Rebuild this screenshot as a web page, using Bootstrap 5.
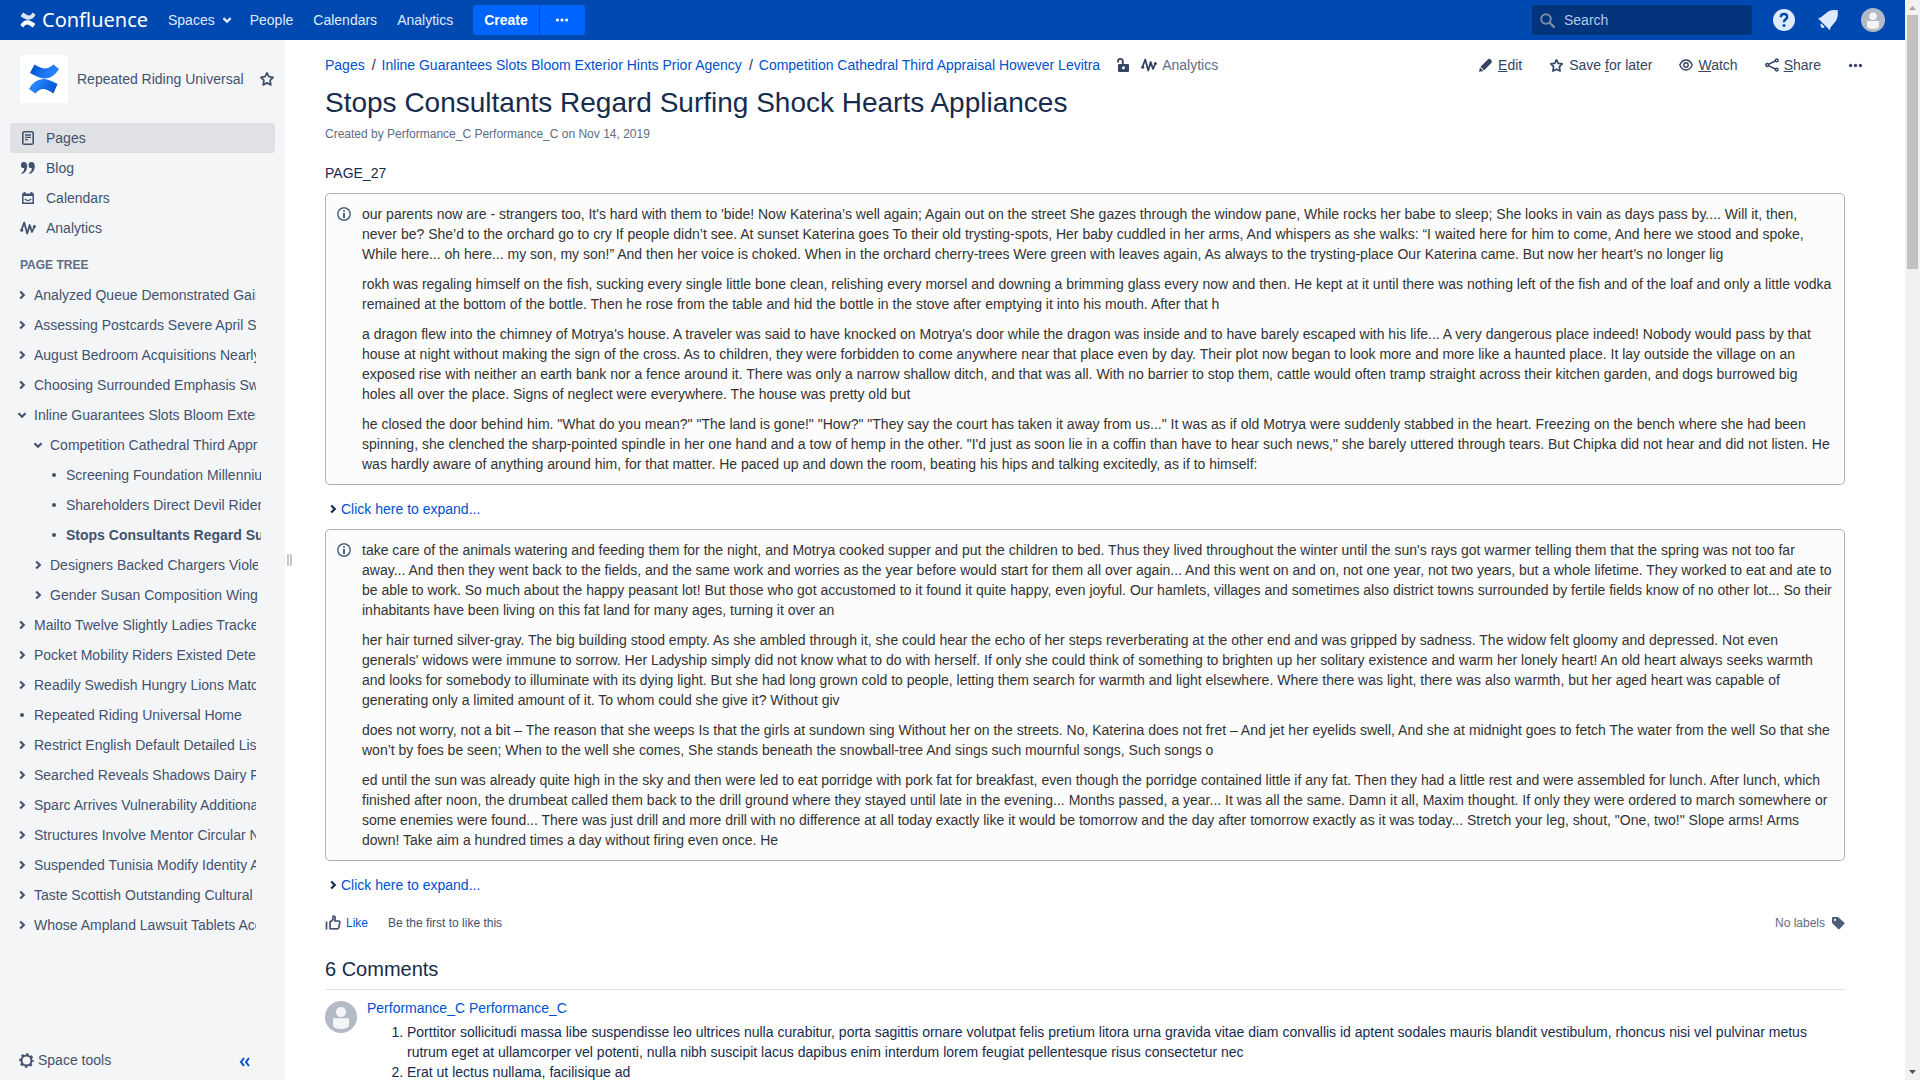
<!DOCTYPE html>
<html lang="en">
<head>
<meta charset="utf-8">
<meta name="viewport" content="width=device-width, initial-scale=1">
<title>Stops Consultants Regard Surfing Shock Hearts Appliances - Confluence</title>
<link href="https://cdn.jsdelivr.net/npm/bootstrap@5.3.0/dist/css/bootstrap.min.css" rel="stylesheet">
<style>
body{font-family:"Liberation Sans",Arial,sans-serif;font-size:14px;line-height:20px;color:#172b4d;background:#fff}
a{color:#0052cc;text-decoration:none}
svg{display:block;flex:none}
/* top bar */
.topbar{height:40px;background:#0049b0;padding:0 20px;color:#deebff}
.topbar a{color:#deebff}
.brand{font-family:"Noto Sans","Open Sans",sans-serif;font-size:20px;font-weight:400;line-height:40px;gap:6px;width:128px}
.topbar a.brand{color:#fff}
.mainmenu{gap:20px;margin-left:20px}
.menu-people{margin-left:-5px}
.createset{gap:1px;margin-left:20px}
.btn-create,.btn-more{height:30px;background:#0065ff;color:#fff;border:0;font-size:14px;line-height:20px;padding:0 11px;font-weight:700}
.btn-create{border-radius:3px 0 0 3px}
.btn-more{border-radius:0 3px 3px 0;width:45px}
.btn-create:hover,.btn-more:hover{background:#2684ff;color:#fff}
.searchbox{width:220px;height:30px;border-radius:3px;background:#04347c;padding-left:8px;gap:9px}
.searchbox input{background:none;border:0;outline:0;color:#deebff;font-size:14px;padding:0;min-width:0}
.searchbox input::placeholder{color:#b3cbee;opacity:1}
.topicons{gap:22px;margin-left:21px}
.iconbtn{background:none;border:0;padding:0;color:inherit}
/* sidebar */
.sidebar{width:285px;background:#f4f5f7;color:#42526e}
.sidebar a{color:#42526e}
.spacehead{padding:15px 10px 0 20px;gap:9px}
.spacelogo{width:48px;height:48px;background:#fff;border-radius:3px}
.spacenav{padding:20px 10px 0}
.spacenav a{height:30px;padding-left:10px;gap:10px;border-radius:3px}
.spacenav a.current{background:#dfe1e5}
.treehead{font-size:12px;font-weight:700;color:#5e6c84;padding:12px 20px 5px;margin:0;line-height:20px}
.tree,.tree ul{list-style:none;margin:0;padding:0}
.tree{padding-left:16px}
.tree ul{padding-left:16px}
.tree-row{height:30px;gap:6px;width:240px}
.tree ul .tree-row{width:226px}
.tree ul ul .tree-row{width:213px}
.tree-row a{overflow:hidden;white-space:nowrap;flex:1}
.sidefoot{padding:0 35px 10px 19px}
.sidefoot button{color:#42526e}
.grip{width:5px;height:12px;border:solid #c1c7d0;border-width:0 2px}
.gripcol{width:10px;padding-left:2px;margin-right:30px}
/* content */
.content{padding-right:60px}
.pagehead{height:50px}
.crumbs{gap:7px}
.crumbs li+li::before{content:"/";color:#172b4d;margin-right:6px}
.actions{gap:27px;margin-right:-18px}
.actions a,.tool{color:#344563;gap:5px}
.tool-analytics{margin-left:11px}
.tool-analytics span{color:#5e6c84}
h1.pagetitle{font-size:28px;line-height:32px;font-weight:400;margin:-3px 0 0}
.fine{font-size:12px;color:#5e6c84}
.byline{margin-top:5px}
.intro{padding:19px 0 10px;margin:0}
.infobox{border:1px solid #a5b3c2;border-radius:5px;background:#fcfcfc;color:#333;padding:10px 10px 10px 11px;gap:11px}
.infobox p{margin:0 0 10px}
.infobox p:last-child{margin:0}
.infobox svg{margin-top:3px}
.expander{gap:3px;padding:14px 3px 10px;border:0;background:none;color:#0052cc}
.likebar{margin-top:8px}
.likebar a{gap:5px}
.likebar .likes{gap:20px;color:#42526e}
.labels{gap:6px}
h2.commenthead{font-size:20px;line-height:24px;font-weight:400;margin:24px 0 0;padding-bottom:8px;border-bottom:1px solid #dfe1e5}
.comment-item{gap:10px;padding-top:8px}
.comment-item svg{margin-top:3px}
.comment-item ol{padding-left:40px;margin:4px 0 0;padding-right:20px}
/* page scroll track */
.track{width:15px;background:#f1f1f1}
.thumb{width:11px;height:254px;background:#c1c1c1}
</style>
<script src="https://cdn.jsdelivr.net/npm/bootstrap@5.3.0/dist/js/bootstrap.bundle.min.js"></script>
</head>
<body>
<svg class="position-absolute" width="0" height="0" aria-hidden="true" xmlns="http://www.w3.org/2000/svg">
<defs>
<linearGradient id="gTop" x1="1" y1=".6" x2="0" y2=".3"><stop offset=".2" stop-color="#2684ff"/><stop offset="1" stop-color="#0052cc"/></linearGradient>
<linearGradient id="gBot" x1="0" y1=".4" x2="1" y2=".7"><stop offset=".2" stop-color="#2684ff"/><stop offset="1" stop-color="#0052cc"/></linearGradient>
</defs>
<symbol id="right" viewBox="0 0 12 12"><path d="M4.200 2.500 7.800 6 4.200 9.500" fill="none" stroke="currentColor" stroke-width="2.200"/></symbol>
<symbol id="down" viewBox="0 0 12 12"><path d="M2.500 4.200 6 7.700 9.500 4.200" fill="none" stroke="currentColor" stroke-width="2.200"/></symbol>
<symbol id="dot" viewBox="0 0 12 12"><circle cx="6" cy="6" r="2" fill="currentColor"/></symbol>
<symbol id="star" viewBox="0 0 16 16"><path d="M8 1.900 9.900 5.700 14.100 6.300 11.100 9.300 11.800 13.900 8 11.900 4.200 13.900 4.900 9.300 1.900 6.300 6.100 5.700Z" fill="none" stroke="currentColor" stroke-width="1.800" stroke-linejoin="round"/></symbol>
<symbol id="dots" viewBox="0 0 16 16"><g fill="currentColor"><circle cx="2.800" cy="8" r="1.800"/><circle cx="8" cy="8" r="1.800"/><circle cx="13.200" cy="8" r="1.800"/></g></symbol>
<symbol id="pulse" viewBox="0 0 16 16"><path d="M1.500 10 4.200 2.500 7.200 13.500 9.700 5 12 12 14.500 6.500" fill="none" stroke="currentColor" stroke-width="1.800" stroke-linejoin="round" stroke-linecap="round"/><g fill="currentColor"><circle cx="1.700" cy="10.200" r="1.500"/><circle cx="14.400" cy="6.500" r="1.500"/></g></symbol>
<symbol id="user" viewBox="0 0 24 24"><circle cx="12" cy="12" r="12" fill="#b3bac5"/><circle cx="12" cy="8.300" r="3.800" fill="#f4f5f7"/><path d="M6 13h12v5q0 3-6 3t-6-3Z" fill="#f4f5f7"/></symbol>
<symbol id="info" viewBox="0 0 14 14"><circle cx="7" cy="7" r="6.200" fill="none" stroke="#4a6785" stroke-width="1.500"/><circle cx="7" cy="4" r="1.100" fill="#4a6785"/><path d="M6 6h2v5H6Z" fill="#4a6785"/></symbol>
</svg>
<div class="d-flex vh-100 overflow-hidden">
<div class="d-flex flex-column flex-grow-1 overflow-hidden">
<header class="topbar d-flex align-items-center flex-shrink-0">
  <a class="brand d-flex align-items-center" href="#"><svg width="16" height="16" viewBox="0 0 16 16" fill="#fff"><path d="M3 .600C5.500 2 7 3.600 8.800 3.600S11.500 2.300 12.600.600L15.600 2.800C13.600 6.200 12 7.700 8.600 7.700S3.500 5.800.6 4.200Z" opacity=".85"/><path d="M13 15.400C10.500 14 9 12.400 7.200 12.400S4.500 13.700 3.400 15.400L.4 13.200C2.400 9.800 4 8.300 7.400 8.300S12.500 10.200 15.400 11.800Z"/></svg>Confluence</a>
  <nav class="mainmenu d-flex align-items-center">
    <a class="d-flex align-items-center" href="#">Spaces<svg class="ms-1" width="16" height="16" viewBox="0 0 12 12"><path d="M3.300 4.600 6 7.200 8.700 4.600" fill="none" stroke="currentColor" stroke-width="1.700"/></svg></a>
    <a class="menu-people" href="#">People</a><a href="#">Calendars</a><a href="#">Analytics</a>
  </nav>
  <div class="createset d-flex">
    <button class="btn btn-create" type="button">Create</button>
    <button class="btn btn-more d-flex align-items-center justify-content-center" type="button" aria-label="Create from template"><svg width="14" height="14"><use href="#dots"/></svg></button>
  </div>
  <label class="searchbox d-flex align-items-center ms-auto"><svg width="15" height="15" viewBox="0 0 15 15"><circle cx="6" cy="6" r="4.800" fill="none" stroke="#7a8ba6" stroke-width="2"/><path d="m9.500 9.500 4.300 4.300" stroke="#7a8ba6" stroke-width="2.400" stroke-linecap="round"/></svg><input type="search" placeholder="Search" aria-label="Search"></label>
  <div class="topicons d-flex align-items-center">
  <button class="iconbtn" type="button" aria-label="Help"><svg width="22" height="22" viewBox="0 0 22 22"><circle cx="11" cy="11" r="11" fill="#deebff"/><path d="M7.800 8.200Q7.900 5 11 5t3.200 2.800Q14.200 9.400 12.500 10.400 11 11.300 11 13.200" fill="none" stroke="#0049b0" stroke-width="2.400"/><circle cx="11" cy="16.400" r="1.500" fill="#0049b0"/></svg></button>
  <button class="iconbtn" type="button" aria-label="Notifications"><svg width="22" height="22" viewBox="0 0 22 22" fill="#deebff"><path d="M11.500 2.200Q15.500.800 19.600 1.200L20.500.900 21 1.500 20.700 2.400Q21.500 9 18 13L13.500 18.500 12.800 21.200 1 9.300 3.600 8.400Z"/><path d="M4 14.200 7.800 18Q5.800 19.800 4.200 18.200T4 14.200Z"/></svg></button>
  <button class="iconbtn" type="button" aria-label="User profile"><svg width="24" height="24"><use href="#user"/></svg></button>
  </div>
</header>
<div class="d-flex flex-grow-1 overflow-hidden">
<aside class="sidebar d-flex flex-column flex-shrink-0">
  <div class="spacehead d-flex align-items-center">
    <a class="spacelogo d-flex align-items-center justify-content-center" href="#" aria-label="Space home"><svg width="32" height="32" viewBox="0 0 32 32"><path d="M6.500 1.500Q13 5.500 17 5.500T25.500 1.500L31 6Q25.500 15.500 16.500 15.500 12 15.500 2 10Z" fill="url(#gTop)"/><path d="M25.500 30.500Q19 26 15 26T7.500 30.500L1 26Q6.500 16 15.500 16 20 16 29.500 21Z" fill="url(#gBot)"/></svg></a>
    <a href="#">Repeated Riding Universal</a>
    <button class="iconbtn ms-auto" type="button" aria-label="Add to favourites"><svg width="16" height="16"><use href="#star"/></svg></button>
  </div>
  <nav class="spacenav">
    <a class="current d-flex align-items-center" href="#"><svg width="16" height="16" viewBox="0 0 16 16"><rect x="2.800" y="1.800" width="10.400" height="12.400" rx="1.500" fill="none" stroke="currentColor" stroke-width="1.600"/><path d="M5 5h6M5 7.300h6M5 9.600h3" stroke="currentColor" stroke-width="1.300"/></svg>Pages</a>
    <a class="d-flex align-items-center" href="#"><svg width="16" height="16" viewBox="0 0 16 16" fill="currentColor"><path id="q" d="M1 5.200A3 3 0 0 1 4 2q3.200 0 3.200 4.500Q7 12.500 1.800 14q-.6-.6 0-1.200Q4.300 11.500 4.300 8 1 8.500 1 5.200Z"/><use href="#q" x="7.600"/></svg>Blog</a>
    <a class="d-flex align-items-center" href="#"><svg width="16" height="16" viewBox="0 0 16 16"><path d="M2.800 5v8.200h10.400V5" fill="none" stroke="currentColor" stroke-width="1.500"/><path d="M2 3.500h1.500V2h2v1.500h5V2h2v1.500H14V6H2Z" fill="currentColor"/><path d="M4.800 9q3.200 3.200 6.400 0" fill="none" stroke="currentColor" stroke-width="1.300"/></svg>Calendars</a>
    <a class="d-flex align-items-center" href="#"><svg width="16" height="16"><use href="#pulse"/></svg>Analytics</a>
  </nav>
  <h2 class="treehead">PAGE TREE</h2>
  <ul class="tree">
    <li><div class="tree-row d-flex align-items-center"><svg width="12" height="12"><use href="#right"/></svg><a href="#">Analyzed Queue Demonstrated Gains</a></div></li>
    <li><div class="tree-row d-flex align-items-center"><svg width="12" height="12"><use href="#right"/></svg><a href="#">Assessing Postcards Severe April Sites</a></div></li>
    <li><div class="tree-row d-flex align-items-center"><svg width="12" height="12"><use href="#right"/></svg><a href="#">August Bedroom Acquisitions Nearly</a></div></li>
    <li><div class="tree-row d-flex align-items-center"><svg width="12" height="12"><use href="#right"/></svg><a href="#">Choosing Surrounded Emphasis Swift</a></div></li>
    <li><div class="tree-row d-flex align-items-center"><svg width="12" height="12"><use href="#down"/></svg><a href="#">Inline Guarantees Slots Bloom Exterior Hints Prior Agency</a></div>
      <ul>
        <li><div class="tree-row d-flex align-items-center"><svg width="12" height="12"><use href="#down"/></svg><a href="#">Competition Cathedral Third Appraisal However Levitra</a></div>
          <ul>
            <li><div class="tree-row d-flex align-items-center"><svg width="12" height="12"><use href="#dot"/></svg><a href="#">Screening Foundation Millennium</a></div></li>
            <li><div class="tree-row d-flex align-items-center"><svg width="12" height="12"><use href="#dot"/></svg><a href="#">Shareholders Direct Devil Riders</a></div></li>
            <li><div class="tree-row d-flex align-items-center"><svg width="12" height="12"><use href="#dot"/></svg><a class="fw-bold" href="#">Stops Consultants Regard Surfing Shock Hearts Appliances</a></div></li>
          </ul></li>
        <li><div class="tree-row d-flex align-items-center"><svg width="12" height="12"><use href="#right"/></svg><a href="#">Designers Backed Chargers Violence</a></div></li>
        <li><div class="tree-row d-flex align-items-center"><svg width="12" height="12"><use href="#right"/></svg><a href="#">Gender Susan Composition Wings</a></div></li>
      </ul></li>
    <li><div class="tree-row d-flex align-items-center"><svg width="12" height="12"><use href="#right"/></svg><a href="#">Mailto Twelve Slightly Ladies Tracked</a></div></li>
    <li><div class="tree-row d-flex align-items-center"><svg width="12" height="12"><use href="#right"/></svg><a href="#">Pocket Mobility Riders Existed Determine</a></div></li>
    <li><div class="tree-row d-flex align-items-center"><svg width="12" height="12"><use href="#right"/></svg><a href="#">Readily Swedish Hungry Lions Match</a></div></li>
    <li><div class="tree-row d-flex align-items-center"><svg width="12" height="12"><use href="#dot"/></svg><a href="#">Repeated Riding Universal Home</a></div></li>
    <li><div class="tree-row d-flex align-items-center"><svg width="12" height="12"><use href="#right"/></svg><a href="#">Restrict English Default Detailed List</a></div></li>
    <li><div class="tree-row d-flex align-items-center"><svg width="12" height="12"><use href="#right"/></svg><a href="#">Searched Reveals Shadows Dairy Front</a></div></li>
    <li><div class="tree-row d-flex align-items-center"><svg width="12" height="12"><use href="#right"/></svg><a href="#">Sparc Arrives Vulnerability Additional</a></div></li>
    <li><div class="tree-row d-flex align-items-center"><svg width="12" height="12"><use href="#right"/></svg><a href="#">Structures Involve Mentor Circular News</a></div></li>
    <li><div class="tree-row d-flex align-items-center"><svg width="12" height="12"><use href="#right"/></svg><a href="#">Suspended Tunisia Modify Identity Area</a></div></li>
    <li><div class="tree-row d-flex align-items-center"><svg width="12" height="12"><use href="#right"/></svg><a href="#">Taste Scottish Outstanding Cultural Area</a></div></li>
    <li><div class="tree-row d-flex align-items-center"><svg width="12" height="12"><use href="#right"/></svg><a href="#">Whose Ampland Lawsuit Tablets Access</a></div></li>
  </ul>
  <div class="sidefoot d-flex align-items-center justify-content-between mt-auto">
    <button class="iconbtn d-flex align-items-center gap-1" type="button"><svg width="15" height="15" viewBox="0 0 15 15" fill="none" stroke="currentColor"><circle cx="7.500" cy="7.500" r="5" stroke-width="2"/><circle cx="7.500" cy="7.500" r="6.300" stroke-width="2" stroke-dasharray="2.500 2.450" stroke-dashoffset="1.200"/></svg>Space tools</button>
    <button class="iconbtn" type="button" aria-label="Collapse sidebar"><svg class="mt-1" width="11" height="10" viewBox="0 0 11 10"><path d="M5 1 2 5l3 4M10 1 7 5l3 4" fill="none" stroke="#0052cc" stroke-width="2"/></svg></button>
  </div>
</aside>
<div class="gripcol d-flex align-items-center flex-shrink-0"><div class="grip"></div></div>
<main class="content flex-grow-1 overflow-hidden">
  <div class="pagehead d-flex align-items-center justify-content-between">
    <div class="d-flex align-items-center">
      <ol class="crumbs list-unstyled d-flex m-0"><li><a href="#">Pages</a></li><li><a href="#">Inline Guarantees Slots Bloom Exterior Hints Prior Agency</a></li><li><a href="#">Competition Cathedral Third Appraisal However Levitra</a></li></ol>
      <a class="tool ms-3" href="#" aria-label="Unrestricted"><svg width="14" height="16" viewBox="0 0 14 16"><path d="M2 5.500V4.300Q2 1.800 4.400 1.800T6.800 4.500V8" fill="none" stroke="currentColor" stroke-width="1.800"/><path fill-rule="evenodd" d="M3 7h9q1 0 1 1v6q0 1-1 1H3q-1 0-1-1V8q0-1 1-1Zm4.500 2.300a1.500 1.500 0 1 0 0 3 1.500 1.500 0 0 0 0-3Z" fill="currentColor"/></svg></a>
      <a class="tool tool-analytics d-flex align-items-center" href="#"><svg width="16" height="16"><use href="#pulse"/></svg><span>Analytics</span></a>
    </div>
    <nav class="actions d-flex align-items-center">
      <a class="d-flex align-items-center" href="#"><svg width="14" height="14" viewBox="0 0 14 14" fill="currentColor"><path d="M1.500 8.700 8.800 1.500q1.500-1.400 3.200.3 1.700 1.600.3 3.200L5.200 12.300Z"/><path d="M1 9.500 4.500 13 0 13.800Z"/></svg><span><u>E</u>dit</span></a>
      <a class="d-flex align-items-center" href="#"><svg width="15" height="15"><use href="#star"/></svg><span>Save <u>f</u>or later</span></a>
      <a class="d-flex align-items-center" href="#"><svg width="14" height="14" viewBox="0 0 14 14" fill="none" stroke="currentColor" stroke-width="1.400"><path d="M.8 7Q3 2 7 2t6.200 5Q11 12 7 12T.8 7Z"/><circle cx="7" cy="7" r="2.200"/></svg><span><u>W</u>atch</span></a>
      <a class="d-flex align-items-center" href="#"><svg width="14" height="14" viewBox="0 0 14 14" fill="none" stroke="currentColor" stroke-width="1.500"><circle cx="2.200" cy="7" r="1.400"/><circle cx="11.700" cy="2.400" r="1.400"/><circle cx="11.700" cy="11.600" r="1.400"/><path d="m3.500 6.300 6.800-3.300M3.500 7.700l6.800 3.300"/></svg><span><u>S</u>hare</span></a>
      <a href="#" aria-label="More actions"><svg width="15" height="15"><use href="#dots"/></svg></a>
    </nav>
  </div>
  <h1 class="pagetitle">Stops Consultants Regard Surfing Shock Hearts Appliances</h1>
  <div class="fine byline">Created by Performance_C Performance_C on Nov 14, 2019</div>
  <p class="intro">PAGE_27</p>
  <section class="infobox d-flex"><svg width="14" height="14"><use href="#info"/></svg><div>
    <p>our parents now are - strangers too, It's hard with them to 'bide! Now Katerina’s well again; Again out on the street She gazes through the window pane, While rocks her babe to sleep; She looks in vain as days pass by.... Will it, then, never be? She’d to the orchard go to cry If people didn’t see. At sunset Katerina goes To their old trysting-spots, Her baby cuddled in her arms, And whispers as she walks: “I waited here for him to come, And here we stood and spoke, While here... oh here... my son, my son!” And then her voice is choked. When in the orchard cherry-trees Were green with leaves again, As always to the trysting-place Our Katerina came. But now her heart’s no longer lig</p>
    <p>rokh was regaling himself on the fish, sucking every single little bone clean, relishing every morsel and downing a brimming glass every now and then. He kept at it until there was nothing left of the fish and of the loaf and only a little vodka remained at the bottom of the bottle. Then he rose from the table and hid the bottle in the stove after emptying it into his mouth. After that h</p>
    <p>a dragon flew into the chimney of Motrya's house. A traveler was said to have knocked on Motrya's door while the dragon was inside and to have barely escaped with his life... A very dangerous place indeed! Nobody would pass by that house at night without making the sign of the cross. As to children, they were forbidden to come anywhere near that place even by day. Their plot now began to look more and more like a haunted place. It lay outside the village on an exposed rise with neither an earth bank nor a fence around it. There was only a narrow shallow ditch, and that was all. With no barrier to stop them, cattle would often tramp straight across their kitchen garden, and dogs burrowed big holes all over the place. Signs of neglect were everywhere. The house was pretty old but</p>
    <p>he closed the door behind him. "What do you mean?" "The land is gone!" "How?" "They say the court has taken it away from us..." It was as if old Motrya were suddenly stabbed in the heart. Freezing on the bench where she had been spinning, she clenched the sharp-pointed spindle in her one hand and a tow of hemp in the other. "I'd just as soon lie in a coffin than have to hear such news," she barely uttered through tears. But Chipka did not hear and did not listen. He was hardly aware of anything around him, for that matter. He paced up and down the room, beating his hips and talking excitedly, as if to himself:</p>
  </div></section>
  <button class="expander d-flex align-items-center" type="button"><svg width="10" height="12" viewBox="1 0 10 12" color="#172b4d"><use href="#right" width="12" height="12"/></svg>Click here to expand...</button>
  <section class="infobox d-flex"><svg width="14" height="14"><use href="#info"/></svg><div>
    <p>take care of the animals watering and feeding them for the night, and Motrya cooked supper and put the children to bed. Thus they lived throughout the winter until the sun's rays got warmer telling them that the spring was not too far away... And then they went back to the fields, and the same work and worries as the year before would start for them all over again... And this went on and on, not one year, not two years, but a whole lifetime. They worked to eat and ate to be able to work. So much about the happy peasant lot! But those who got accustomed to it found it quite happy, even joyful. Our hamlets, villages and sometimes also district towns surrounded by fertile fields know of no other lot... So their inhabitants have been living on this fat land for many ages, turning it over an</p>
    <p>her hair turned silver-gray. The big building stood empty. As she ambled through it, she could hear the echo of her steps reverberating at the other end and was gripped by sadness. The widow felt gloomy and depressed. Not even generals' widows were immune to sorrow. Her Ladyship simply did not know what to do with herself. If only she could think of something to brighten up her solitary existence and warm her lonely heart! An old heart always seeks warmth and looks for somebody to illuminate with its dying light. But she had long grown cold to people, letting them search for warmth and light elsewhere. Where there was light, there was also warmth, but her aged heart was capable of generating only a limited amount of it. To whom could she give it? Without giv</p>
    <p>does not worry, not a bit – The reason that she weeps Is that the girls at sundown sing Without her on the streets. No, Katerina does not fret – And jet her eyelids swell, And she at midnight goes to fetch The water from the well So that she won’t by foes be seen; When to the well she comes, She stands beneath the snowball-tree And sings such mournful songs, Such songs o</p>
    <p>ed until the sun was already quite high in the sky and then were led to eat porridge with pork fat for breakfast, even though the porridge contained little if any fat. Then they had a little rest and were assembled for lunch. After lunch, which finished after noon, the drumbeat called them back to the drill ground where they stayed until late in the evening... Months passed, a year... It was all the same. Damn it all, Maxim thought. If only they were ordered to march somewhere or some enemies were found... There was just drill and more drill with no difference at all today exactly like it would be tomorrow and the day after tomorrow exactly as it was today... Stretch your leg, shout, "One, two!" Slope arms! Arms down! Take aim a hundred times a day without firing even once. He</p>
  </div></section>
  <button class="expander d-flex align-items-center" type="button"><svg width="10" height="12" viewBox="1 0 10 12" color="#172b4d"><use href="#right" width="12" height="12"/></svg>Click here to expand...</button>
  <div class="likebar fine d-flex justify-content-between">
    <div class="likes d-flex align-items-center">
      <a class="d-flex align-items-center" href="#"><svg width="16" height="16" viewBox="0 0 16 16" fill="none" stroke="#42526e" stroke-width="1.700"><path d="M1.500 6.500v8M5 13.700V7L8 4.500V1.900q0-1 1-.9 1.400.2 1.200 2L9.800 6h3.700q1.500 0 1.300 1.400l-.9 5q-.3 1.400-1.600 1.400Z" stroke-linejoin="round"/></svg>Like</a>
      <span>Be the first to like this</span>
    </div>
    <div class="labels d-flex align-items-center">No labels<svg width="14" height="14" viewBox="0 0 14 14"><path fill-rule="evenodd" d="M1 2q0-1 1-1h4.600q.6 0 1 .4l5.600 5q.8.700 0 1.500l-4.600 5q-.8.700-1.500 0L1.500 7.500Q1 7 1 6.400Zm3 .8a1.100 1.100 0 1 0 0 2.200 1.100 1.100 0 0 0 0-2.200Z" fill="#505f79"/></svg></div>
  </div>
  <h2 class="commenthead">6 Comments</h2>
  <div class="comment-item d-flex">
    <svg width="32" height="32"><use href="#user"/></svg>
    <div><a href="#">Performance_C Performance_C</a>
      <ol><li>Porttitor sollicitudi massa libe suspendisse leo ultrices nulla curabitur, porta sagittis ornare volutpat felis pretium litora urna gravida vitae diam convallis id aptent sodales mauris blandit vestibulum, rhoncus nisi vel pulvinar metus rutrum eget at ullamcorper vel potenti, nulla nibh suscipit lacus dapibus enim interdum lorem feugiat pellentesque risus consectetur nec</li><li>Erat ut lectus nullama, facilisique ad</li></ol></div>
  </div>
</main>
</div>
</div>
<div class="track d-flex flex-column align-items-center justify-content-between flex-shrink-0" aria-hidden="true">
  <div><svg width="11" height="15" viewBox="0 0 11 15"><path d="M2 10h7L5.500 6Z" fill="#a3a3a3"/></svg><div class="thumb"></div></div>
  <svg width="11" height="15" viewBox="0 0 11 15"><path d="M2 5h7L5.500 9Z" fill="#505050"/></svg>
</div>
</div>
</body>
</html>
